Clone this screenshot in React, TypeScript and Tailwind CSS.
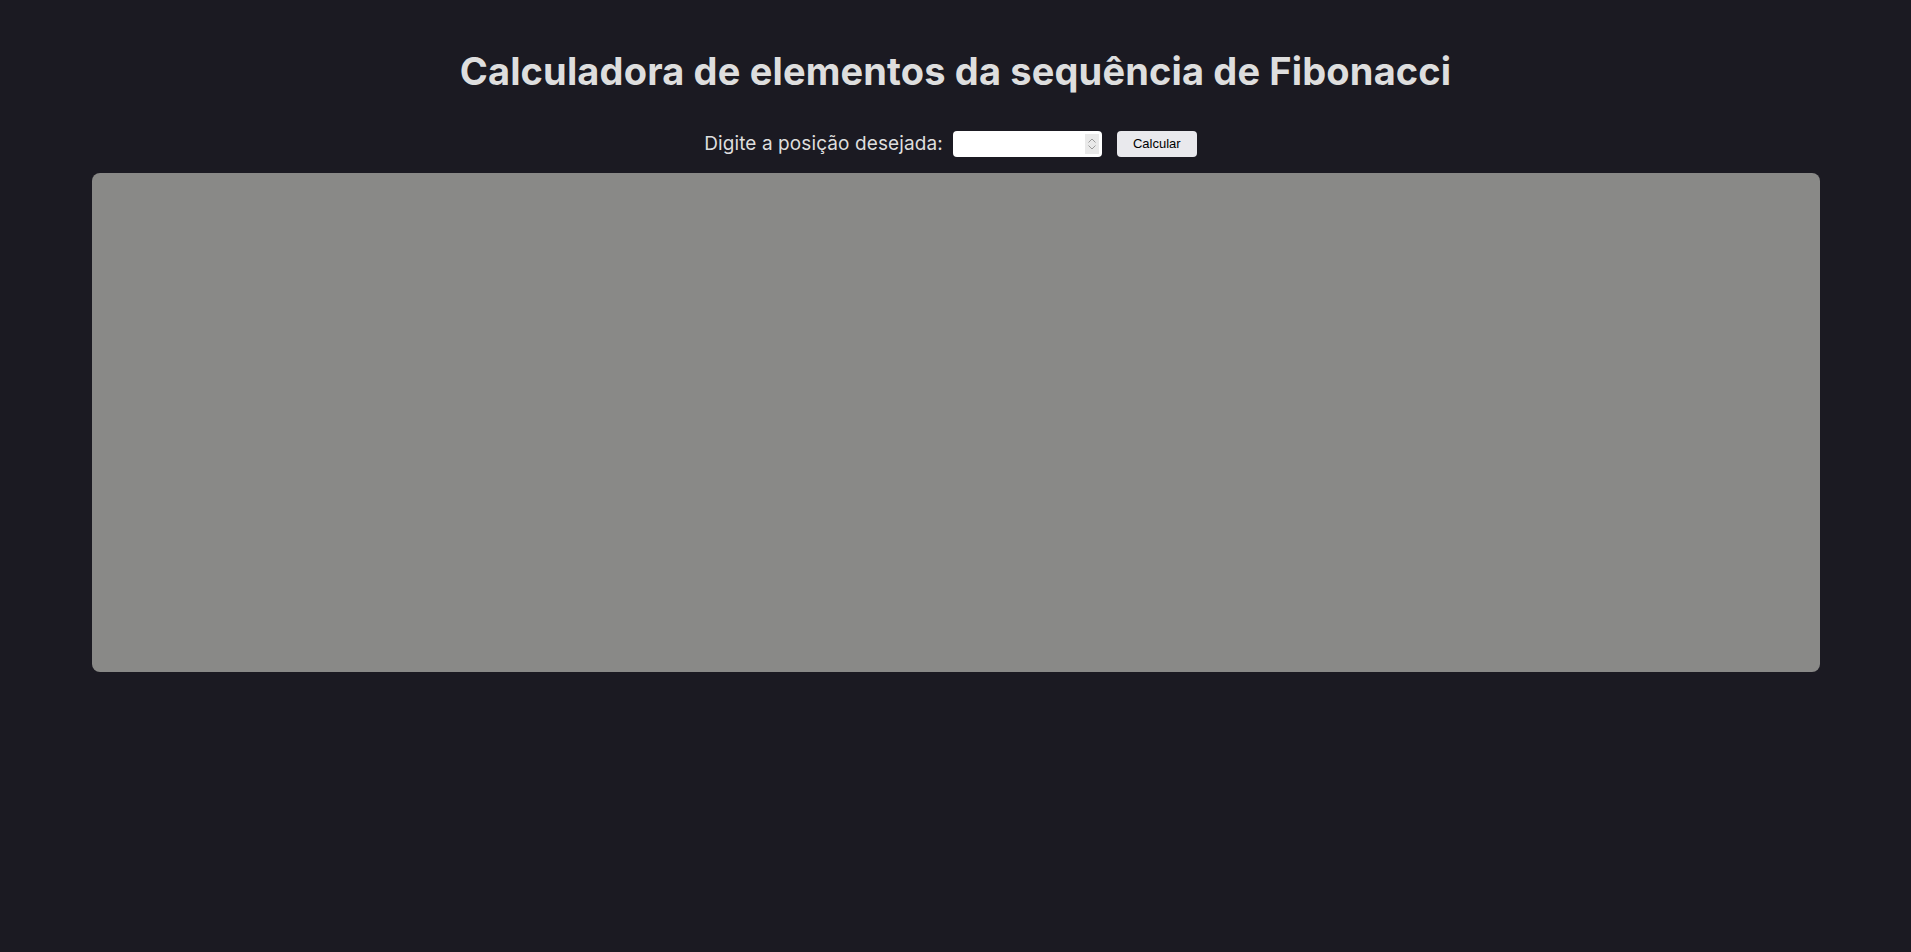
export default function App() {
  return (
    <div className="min-h-screen bg-[#1b1a22] flex flex-col items-center">
      <h1 className="mt-[49px] text-[38px] leading-[44px] font-bold tracking-[0.15px] text-[#dedede] font-['Inter',sans-serif]">
        Calculadora de elementos da sequência de Fibonacci
      </h1>
      <div className="mt-[38px] pr-[10px] flex items-center">
        <label className="text-[19px] leading-[26px] tracking-[0.1px] text-[#dedede] font-['Inter',sans-serif]">
          Digite a posição desejada:
        </label>
        <div className="ml-[10px] w-[149px] h-[26px] bg-white rounded-[4px] flex items-center justify-end pr-[3px]">
          <div className="w-[14px] h-[20px] bg-[#e9e9e9] flex flex-col items-center justify-center gap-[2px]">
            <svg width="8" height="5" viewBox="0 0 8 5" fill="none" stroke="#9a9a9a" strokeWidth="1">
              <path d="M0.5 4.5 L4 1 L7.5 4.5" />
            </svg>
            <svg width="8" height="5" viewBox="0 0 8 5" fill="none" stroke="#9a9a9a" strokeWidth="1">
              <path d="M0.5 0.5 L4 4 L7.5 0.5" />
            </svg>
          </div>
        </div>
        <button className="ml-[15px] w-[80px] h-[26px] bg-[#e9e9ed] rounded-[4px] text-[13px] text-black font-['Liberation_Sans',sans-serif]">
          Calcular
        </button>
      </div>
      <div className="mt-[16px] w-[1728px] h-[499px] bg-[#898987] rounded-[8px]" />
    </div>
  );
}
